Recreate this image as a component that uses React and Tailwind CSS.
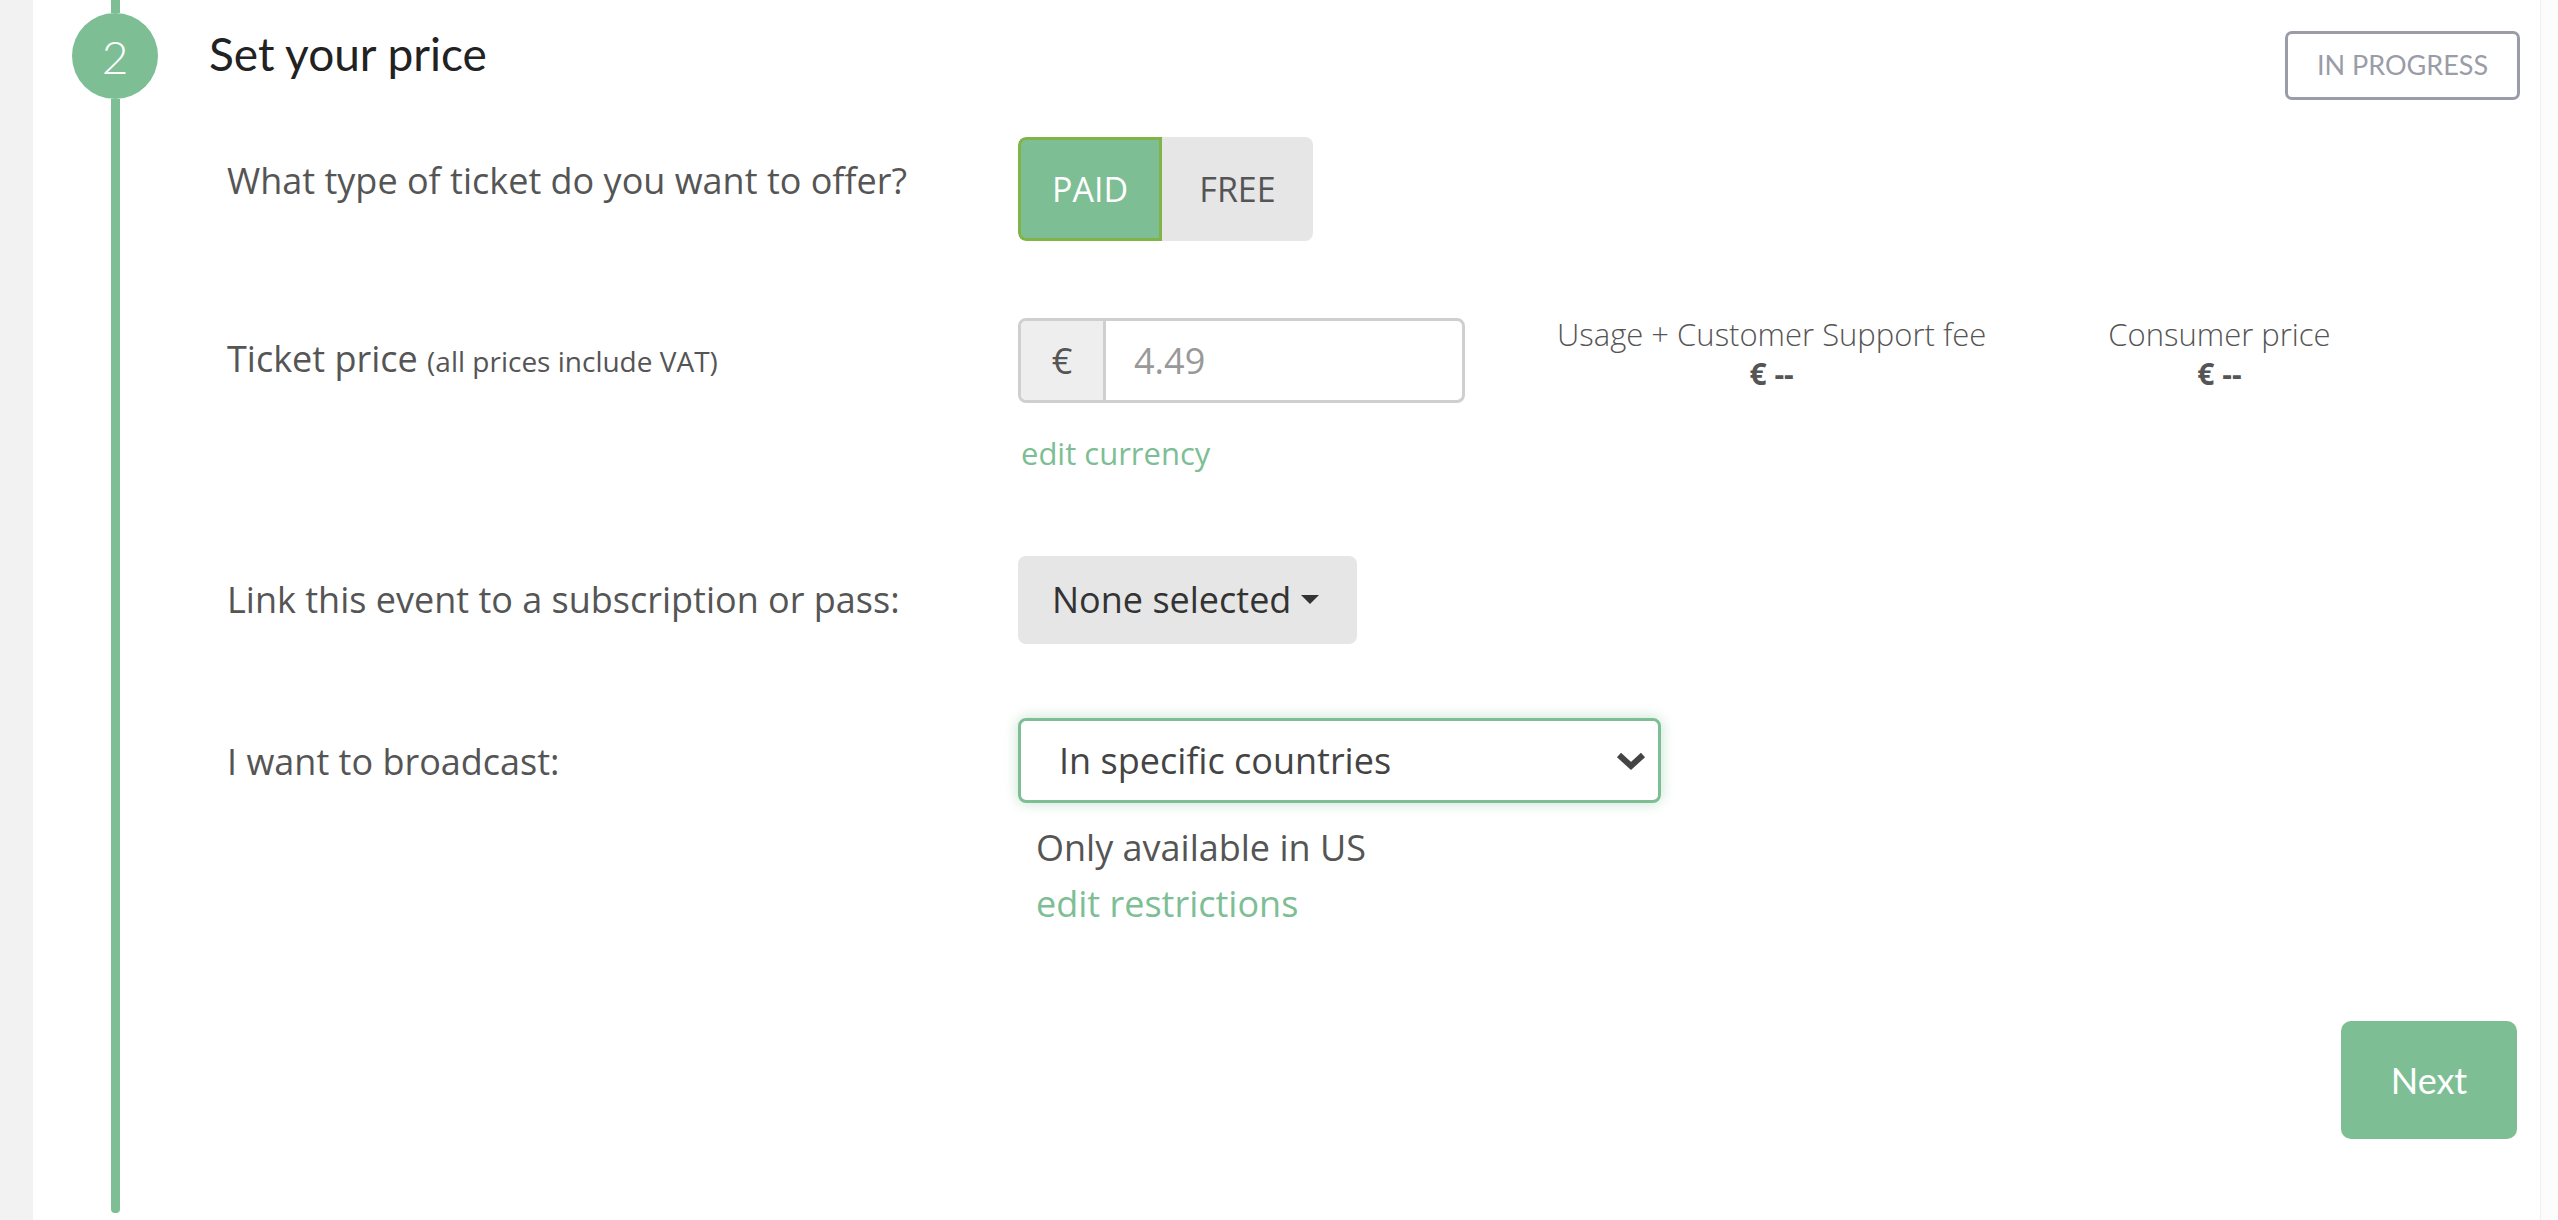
import React, { useState } from "react";

function FeeColumn({ title, value }) {
  return (
    <div className="flex flex-col items-center text-[#555]">
      <div className="text-[31px] font-light leading-[40px]">{title}</div>
      <div className="text-[30px] font-bold leading-[40px]">{value}</div>
    </div>
  );
}

export default function App() {
  const [ticketType, setTicketType] = useState("paid");

  return (
    <div className="flex h-[1220px] w-full overflow-hidden bg-white font-['Open_Sans',sans-serif]">
      {/* left gutter */}
      <div className="w-[33px] shrink-0 bg-[#f2f2f2]" />

      <div className="flex flex-1">
        {/* step timeline */}
        <div className="ml-[39px] flex w-[86px] shrink-0 flex-col items-center">
          <div className="h-[13px] w-[9px] bg-[#7dbe94]" />
          <div className="flex h-[86px] w-[86px] items-center justify-center rounded-full bg-[#7dbe94] font-['Lato',sans-serif] text-[46px] font-light text-white">
            2
          </div>
          <div className="h-[1114px] w-[9px] rounded-b bg-[#7dbe94]" />
        </div>

        {/* step content */}
        <div className="flex flex-1 flex-col pl-[51px] pr-[20px]">
          <div className="flex items-start justify-between">
            <h2 className="mt-[26px] font-['Lato',sans-serif] text-[46px] leading-[56px] text-[#222]">
              Set your price
            </h2>
            <div className="mt-[31px] flex h-[69px] w-[235px] items-center justify-center rounded-[7px] border-[3px] border-[#9a9ca8] font-['Lato',sans-serif] text-[27px] text-[#9a9ca8]">
              IN PROGRESS
            </div>
          </div>

          <div className="ml-[18px] flex flex-col">
            {/* ticket type */}
            <div className="mt-[37px] flex items-start">
              <div className="mt-[20px] w-[791px] shrink-0 text-[36px] leading-[48px] text-[#555]">
                What type of ticket do you want to offer?
              </div>
              <div className="flex h-[104px] overflow-hidden rounded-[8px]">
                <button
                  onClick={() => setTicketType("paid")}
                  className={
                    ticketType === "paid"
                      ? "w-[144px] rounded-l-[8px] border-[3px] border-[#80b446] bg-[#7dbe94] text-[34px] text-white"
                      : "w-[144px] bg-[#e6e6e6] text-[34px] text-[#555]"
                  }
                >
                  PAID
                </button>
                <button
                  onClick={() => setTicketType("free")}
                  className={
                    ticketType === "free"
                      ? "w-[151px] rounded-r-[8px] border-[3px] border-[#80b446] bg-[#7dbe94] text-[34px] text-white"
                      : "w-[151px] bg-[#e6e6e6] text-[34px] text-[#555]"
                  }
                >
                  FREE
                </button>
              </div>
            </div>

            {/* ticket price */}
            <div className="mt-[77px] flex items-start">
              <div className="mt-[17px] w-[791px] shrink-0 text-[36px] leading-[48px] text-[#555]">
                Ticket price <span className="text-[28px]">(all prices include VAT)</span>
              </div>
              <div className="flex flex-col">
                <div className="flex h-[85px] w-[447px] overflow-hidden rounded-[8px] border-[3px] border-[#cfcfcf]">
                  <div className="flex w-[85px] shrink-0 items-center justify-center border-r-[3px] border-[#cfcfcf] bg-[#eeeeee] text-[36px] text-[#555]">
                    €
                  </div>
                  <input
                    className="min-w-0 flex-1 pl-[28px] text-[36px] text-[#555] outline-none placeholder:text-[#999]"
                    placeholder="4.49"
                  />
                </div>
                <a className="mt-[26px] ml-[3px] text-[31px] leading-[48px] text-[#7dbe94]">edit currency</a>
              </div>
              <div className="mt-[-4px] ml-[92px] flex gap-[122px]">
                <FeeColumn title="Usage + Customer Support fee" value="€ --" />
                <FeeColumn title="Consumer price" value="€ --" />
              </div>
            </div>

            {/* subscription */}
            <div className="mt-[79px] flex items-start">
              <div className="mt-[20px] w-[791px] shrink-0 text-[36px] leading-[48px] text-[#555]">
                Link this event to a subscription or pass:
              </div>
              <button className="flex h-[88px] items-center gap-[10px] rounded-[8px] bg-[#e6e6e6] pl-[34px] pr-[38px] text-[36px] text-[#333]">
                None selected
                <svg width="18" height="10" viewBox="0 0 18 10">
                  <path d="M0 0 L18 0 L9 9 Z" fill="#333" />
                </svg>
              </button>
            </div>

            {/* broadcast */}
            <div className="mt-[74px] flex items-start">
              <div className="mt-[20px] w-[791px] shrink-0 text-[36px] leading-[48px] text-[#555]">
                I want to broadcast:
              </div>
              <div className="flex flex-col">
                <div className="flex h-[85px] w-[643px] items-center justify-between rounded-[8px] border-[3px] border-[#7dbe94] pl-[38px] pr-[12px] text-[36px] text-[#444] shadow-[0_0_14px_rgba(125,190,148,0.45)]">
                  In specific countries
                  <svg width="30" height="20" viewBox="0 0 30 20">
                    <path d="M3 4 L15 15 L27 4" fill="none" stroke="#444" strokeWidth="6" />
                  </svg>
                </div>
                <div className="mt-[21px] ml-[18px] text-[36px] leading-[48px] text-[#555]">Only available in US</div>
                <a className="mt-[8px] ml-[18px] text-[36px] leading-[48px] text-[#7dbe94]">edit restrictions</a>
              </div>
            </div>

            <div className="mt-[93px] flex justify-end pr-[3px]">
              <button className="h-[118px] w-[176px] rounded-[10px] bg-[#7dbe94] font-['Lato',sans-serif] text-[36px] text-white">
                Next
              </button>
            </div>
          </div>
        </div>
      </div>

      {/* right gutter */}
      <div className="w-[18px] shrink-0 border-l border-[#f0f0f0] bg-[#fcfcfc]" />
    </div>
  );
}
